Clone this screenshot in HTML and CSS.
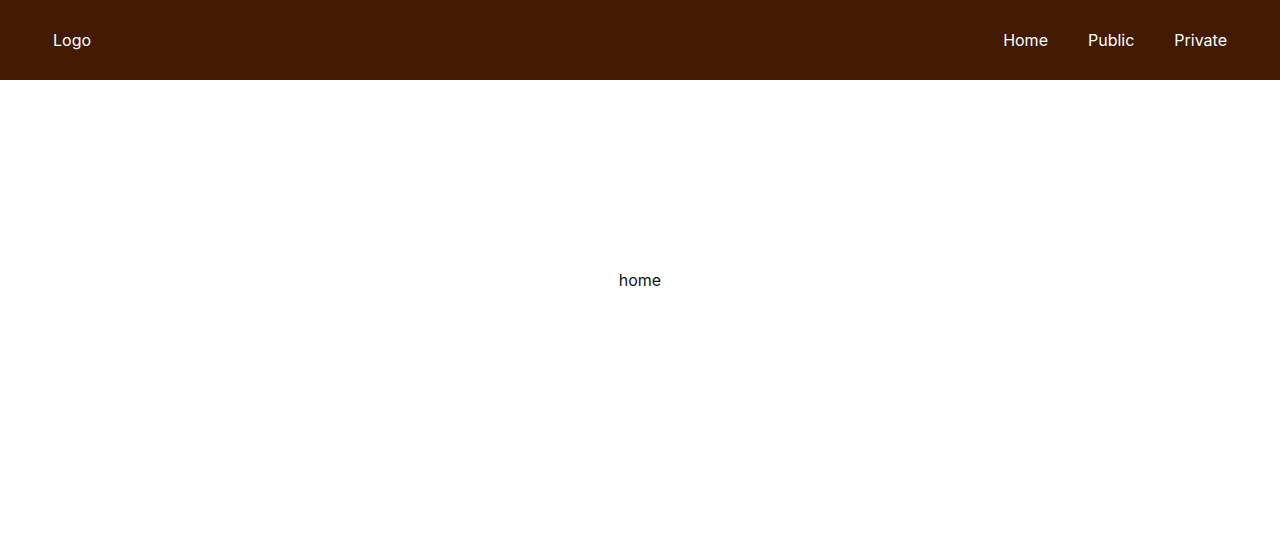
FILE: index.html
```html
<!DOCTYPE html>
<html lang="en">
<head>
<meta charset="utf-8">
<title>Home</title>
<link rel="stylesheet" href="styles.css">
</head>
<body>
<header class="topbar">
  <a class="logo" href="#">Logo</a>
  <nav class="nav">
    <a href="#">Home</a>
    <a href="#">Public</a>
    <a href="#">Private</a>
  </nav>
</header>
<main class="content">
  <p class="page-text">home</p>
</main>
</body>
</html>
```
FILE: styles.css
```css
* { box-sizing: border-box; }
html, body { margin: 0; padding: 0; }
body {
  font-family: Inter, "Noto Sans", sans-serif;
  font-size: 16px;
  color: #111;
  background: #fff;
}
.topbar {
  height: 80px;
  background: #431a02;
  display: flex;
  align-items: center;
  justify-content: space-between;
  padding: 0 53px 0 53px;
}
.topbar a {
  color: #fff;
  text-decoration: none;
  font-size: 16px;
}
.nav {
  display: flex;
  gap: 40px;
}
.content {
  height: 400px;
  display: flex;
  align-items: center;
  justify-content: center;
}
.page-text { margin: 0; }
```
